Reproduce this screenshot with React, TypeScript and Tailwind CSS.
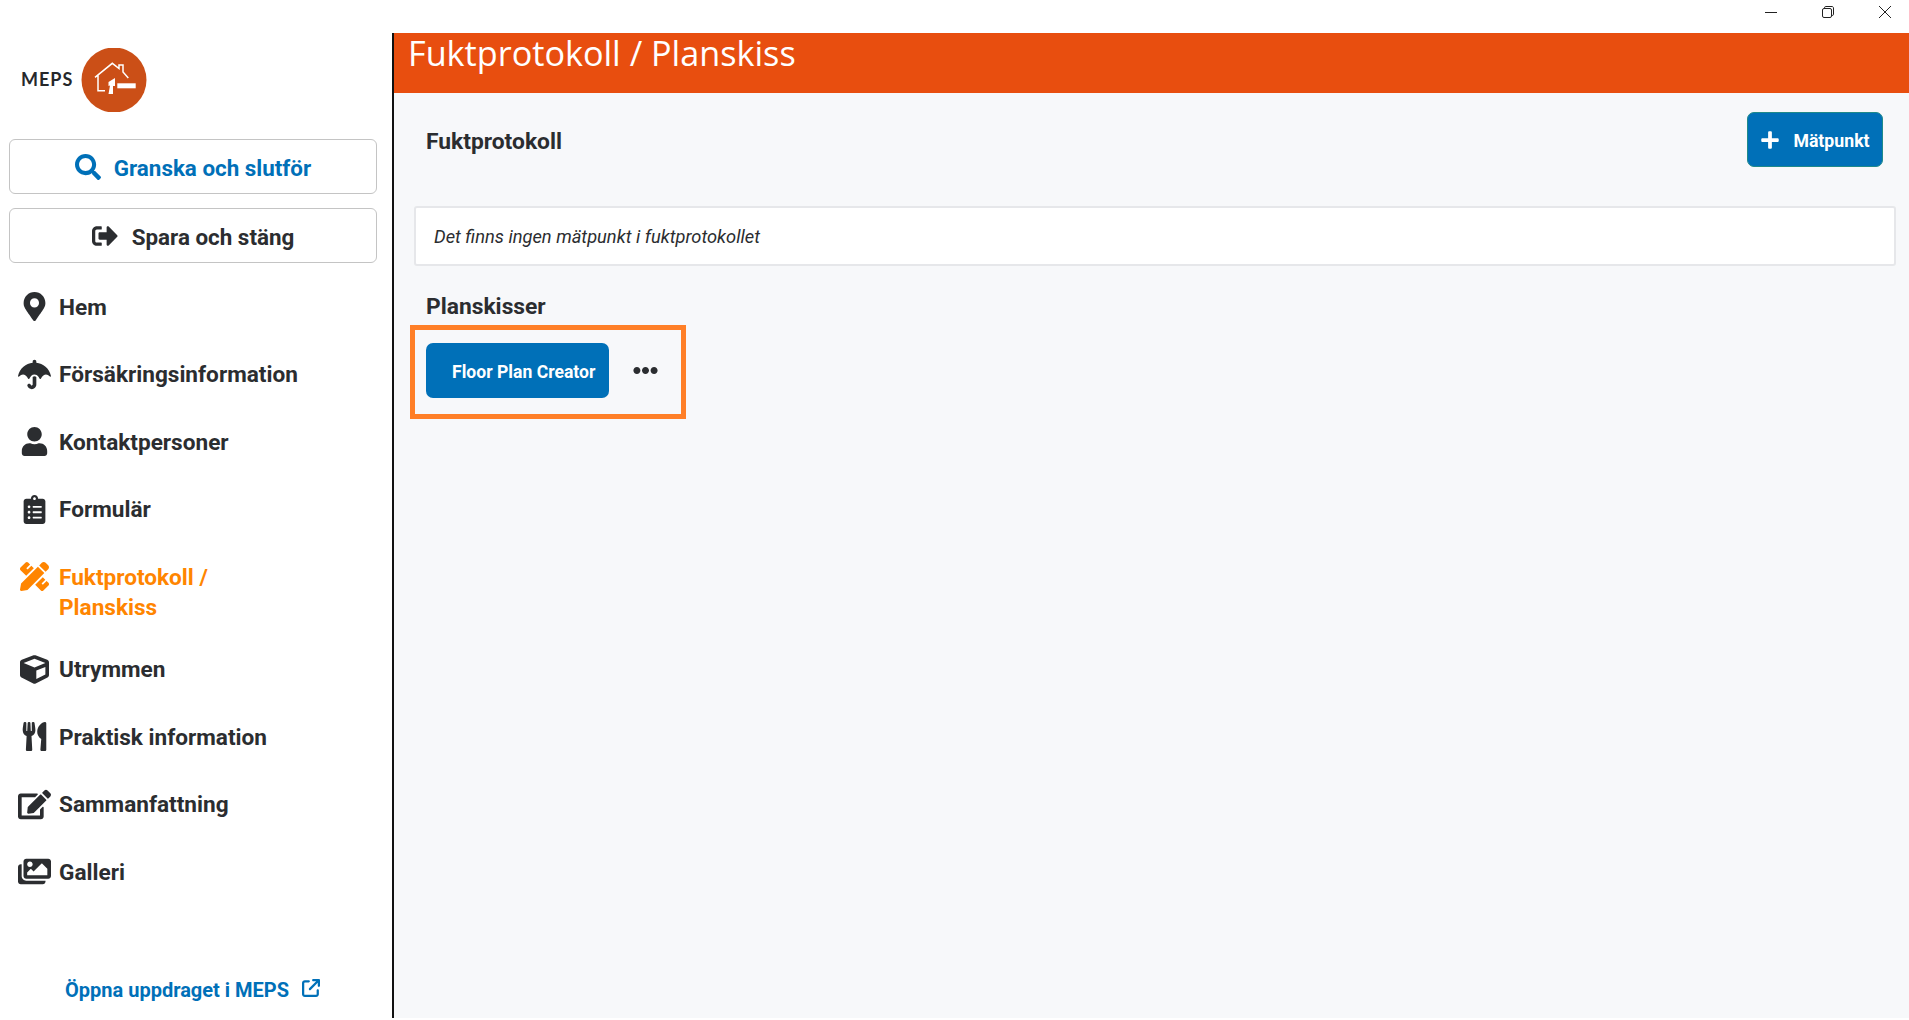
import React from "react";
import {
  FaMapMarkerAlt,
  FaUmbrella,
  FaUser,
  FaClipboardList,
  FaPencilRuler,
  FaCube,
  FaUtensils,
  FaEdit,
  FaImages,
  FaSearch,
  FaSignOutAlt,
  FaPlus,
  FaEllipsisH,
} from "react-icons/fa";
import { FaArrowUpRightFromSquare } from "react-icons/fa6";

const items = [
  { label: "Hem", Icon: FaMapMarkerAlt, size: 29 },
  { label: "Försäkringsinformation", Icon: FaUmbrella, size: 33 },
  { label: "Kontaktpersoner", Icon: FaUser, size: 29 },
  { label: "Formulär", Icon: FaClipboardList, size: 29 },
  { label: "Fuktprotokoll /\nPlanskiss", Icon: FaPencilRuler, size: 29, active: true },
  { label: "Utrymmen", Icon: FaCube, size: 29 },
  { label: "Praktisk information", Icon: FaUtensils, size: 29 },
  { label: "Sammanfattning", Icon: FaEdit, size: 33 },
  { label: "Galleri", Icon: FaImages, size: 33 },
];

function Logo() {
  return (
    <div className="flex items-start pl-[21px] pt-[15px] h-[106px]">
      <span className="font-['Lato','Open_Sans',sans-serif] font-bold text-[18px] tracking-[1px] text-[#26282b] w-[60px] leading-[62px]">
        MEPS
      </span>
      <svg width="66" height="64" viewBox="0 0 66 64" className="shrink-0">
        <circle cx="33" cy="32" r="32.5" fill="#cb4f17" />
        <path
          d="M14 29.3 L31.3 15.3 L38 20.5 L38 17 L42 17 L42 24 L47.3 30 M17 27.5 L17 42.7 L24 42.7"
          fill="none"
          stroke="#fff"
          strokeWidth="1.5"
        />
        <path
          d="M34 30 L27.5 34 L27.5 38 L29 37.5 L27.5 46 L32 46 L32 38 L34 38 Z"
          fill="#fff"
        />
        <rect x="36.3" y="35.3" width="18.4" height="5" fill="#fff" />
      </svg>
    </div>
  );
}

function Sidebar() {
  return (
    <aside className="w-[394px] shrink-0 border-r-2 border-[#111] bg-white flex flex-col font-['Roboto',sans-serif] text-[#2b2d30]">
      <Logo />
      <div className="pl-[9px] pr-[15px] flex flex-col gap-[14px]">
        <button className="h-[55px] border border-[#c4c4c4] rounded-[6px] bg-white flex items-center justify-center gap-[13px] text-[22.4px] font-bold text-[#0070b8]">
          <FaSearch size={26} className="mt-[1px]" />
          <span className="pt-[4px]">Granska och slutför</span>
        </button>
        <button className="h-[55px] border border-[#c4c4c4] rounded-[6px] bg-white flex items-center justify-center gap-[14px] text-[22.4px] font-bold text-[#2b2d30]">
          <FaSignOutAlt size={26} className="mt-[1px]" />
          <span className="pt-[4px]">Spara och stäng</span>
        </button>
      </div>
      <nav className="mt-[10px] flex flex-col">
        {items.map(({ label, Icon, size, active }) => (
          <div
            key={label}
            className={`flex items-start pt-[18.75px] pl-[18px] text-[22.6px] leading-[30px] font-bold ${active ? "pb-[12.75px] text-[#ff8500]" : "pb-[17.75px] text-[#2b2d30]"}`}
          >
            <span className="w-[41px] h-[30px] shrink-0 flex items-center justify-start">
              <span className="w-[33px] flex justify-center">
                <Icon size={size} />
              </span>
            </span>
            <span className="whitespace-pre-line mt-[1px]">{label}</span>
          </div>
        ))}
      </nav>
      <div className="mt-auto pb-[14px] pl-[65px] flex items-center gap-[13px] text-[20px] font-bold text-[#0070b8] leading-[28px]">
        <span>Öppna uppdraget i MEPS</span>
        <FaArrowUpRightFromSquare size={18} className="-mt-[4px]" />
      </div>
    </aside>
  );
}

function TitleBar() {
  return (
    <div className="h-[33px] bg-white flex justify-end items-start text-[#222]">
      <div className="flex pr-[18px] pt-[6px] gap-[45px]">
        <svg width="12" height="12" viewBox="0 0 12 12" fill="none" stroke="currentColor" strokeWidth="1">
          <path d="M0 6.5H12" />
        </svg>
        <svg width="12" height="12" viewBox="0 0 12 12" fill="none" stroke="currentColor" strokeWidth="1">
          <rect x="0.5" y="2.5" width="9" height="9" rx="1.5" />
          <path d="M2.5 2V1.8C2.5 1 3 0.5 3.8 0.5H10C10.8 0.5 11.5 1.2 11.5 2V8.2C11.5 9 11 9.5 10.2 9.5H10" />
        </svg>
        <svg width="12" height="12" viewBox="0 0 12 12" fill="none" stroke="currentColor" strokeWidth="1">
          <path d="M0 0L12 12M12 0L0 12" />
        </svg>
      </div>
    </div>
  );
}

function Main() {
  return (
    <main className="flex-1 flex flex-col bg-[#f7f8fa] font-['Roboto',sans-serif] text-[#2b2d30]">
      <header className="h-[60px] bg-[#e84e0f] pl-[14px]">
        <h1 className="font-['Open_Sans',sans-serif] text-[34.2px] leading-[40px] font-medium text-white">
          Fuktprotokoll / Planskiss
        </h1>
      </header>
      <div className="pl-[20px] pr-[13px]">
        <div className="flex items-center justify-between pl-[12px] pr-[13px] pt-[19px] h-[74px]">
          <h2 className="text-[22.8px] font-bold leading-[30px] pt-[4px]">Fuktprotokoll</h2>
          <button className="w-[136px] h-[55px] rounded-[7px] border border-[#1f8a8a] bg-[#0070b8] text-white flex items-center justify-center gap-[13px] text-[17.7px] font-bold">
            <FaPlus size={20} />
            <span className="pt-[3px]">Mätpunkt</span>
          </button>
        </div>
        <div className="mt-[39px] h-[60px] border-2 border-[#e6e7ea] rounded-[3px] bg-white flex items-center pl-[18px] pt-[2px] italic text-[18.3px]">
          Det finns ingen mätpunkt i fuktprotokollet
        </div>
        <h2 className="mt-[25px] pl-[12px] text-[22.8px] font-bold leading-[30px] pt-[1px]">Planskisser</h2>
        <div className="-ml-[4px] mt-[3px] w-[276px] h-[94px] border-[5px] border-[#ff7f27] flex items-start pt-[13px] pl-[11px] gap-[24px]">
          <button className="w-[183px] h-[55px] rounded-[7px] bg-[#0070b8] text-white text-[17.6px] font-bold pl-[26px] pt-[3px] text-left">
            Floor Plan Creator
          </button>
          <FaEllipsisH size={25} className="text-[#2b2d30] mt-[15px]" />
        </div>
      </div>
    </main>
  );
}

export default function App() {
  return (
    <div className="w-[1909px] h-[1020px] bg-white flex flex-col overflow-hidden">
      <TitleBar />
      <div className="h-[985px] flex">
        <Sidebar />
        <Main />
      </div>
      <div className="flex-1 bg-white" />
    </div>
  );
}
